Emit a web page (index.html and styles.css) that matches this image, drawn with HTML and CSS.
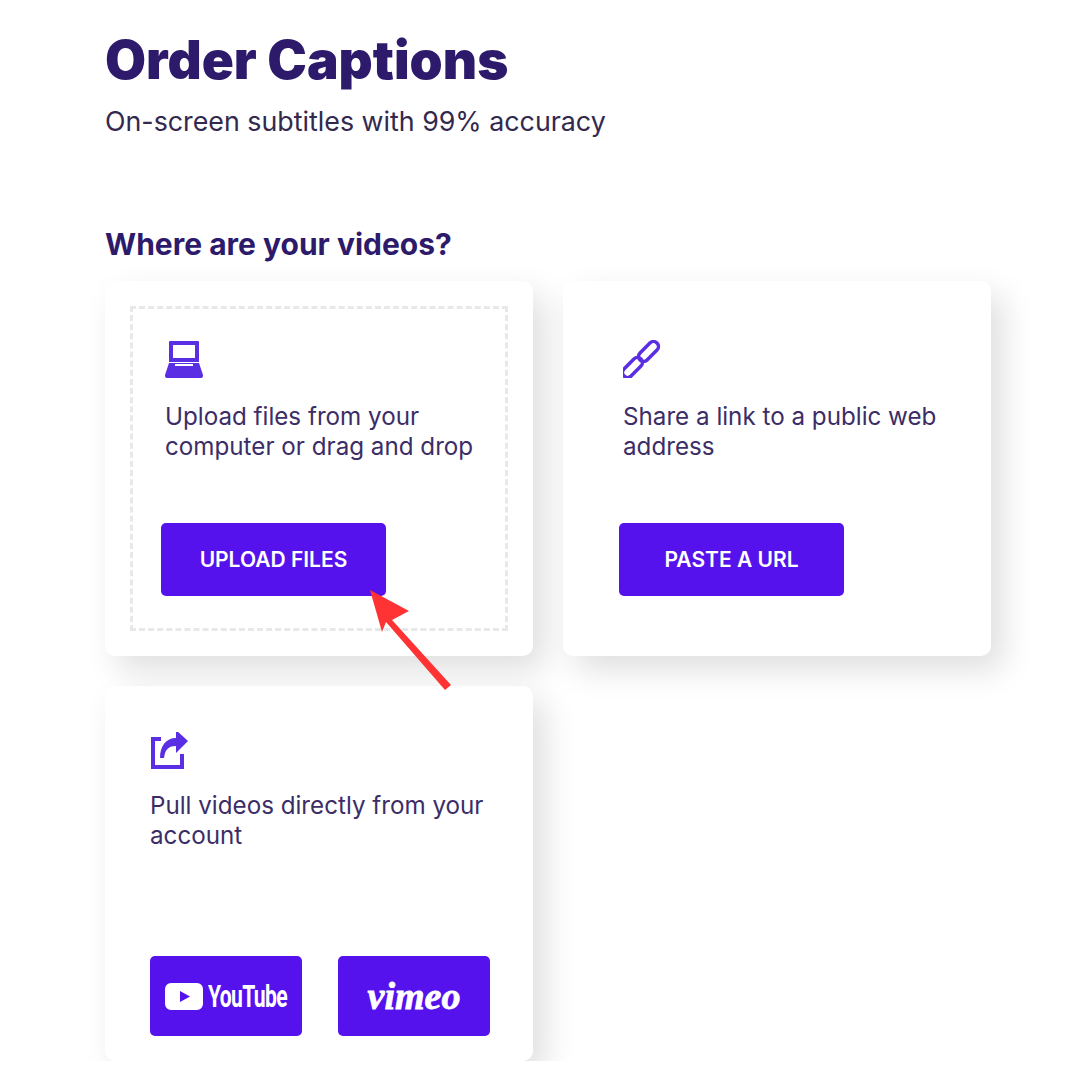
FILE: index.html
```html
<!DOCTYPE html>
<html lang="en">
<head>
    <meta charset="UTF-8">
    <title>Order Captions</title>
    <link rel="stylesheet" href="styles.css">
</head>
<body>
    <div class="page">
        <h1 class="title">Order Captions</h1>
        <p class="subtitle">On-screen subtitles with 99% accuracy</p>
        <h2 class="section-title">Where are your videos?</h2>

        <div class="cards">
            <div class="card">
                <div class="drop-zone dashed">
                    <svg class="icon" viewBox="0 0 38 38">
                        <path fill="#5a2ee2" fill-rule="evenodd" d="M5 1h28a1 1 0 0 1 1 1v20H4V2a1 1 0 0 1 1-1zM8 5v13h22V5z"/>
                        <path fill="#5a2ee2" fill-rule="evenodd" d="M4 23h30l4 12v1a2 2 0 0 1-2 2H2a2 2 0 0 1-2-2v-1zM10 24v2h18v-2z"/>
                    </svg>
                    <p class="card-text">Upload files from your<br>computer or drag and drop</p>
                    <a class="btn">UPLOAD FILES</a>
                </div>
            </div>

            <div class="card">
                <div class="drop-zone">
                    <svg class="icon" viewBox="0 0 38 38">
                        <g fill="none" stroke="#5a2ee2" stroke-width="3.5">
                            <rect x="13.500" y="6.500" width="24" height="10" rx="5" transform="rotate(-45 25.500 11.500)"/>
                            <rect x="-2.500" y="22.500" width="24" height="10" rx="5" transform="rotate(-45 9.500 27.500)"/>
                        </g>
                    </svg>
                    <p class="card-text">Share a link to a public web<br>address</p>
                    <a class="btn">PASTE A URL</a>
                </div>
            </div>

            <div class="card card-accounts">
                <svg class="icon icon-share" viewBox="0 0 38 38">
                    <path fill="none" stroke="#5a2ee2" stroke-width="4" d="M11 7H3v28h29V22"/>
                    <path fill="#5a2ee2" d="M26 -2l12 11-12 12v-7c-7 0-11 3-12 12H10c0-12 6-20 16-20z"/>
                </svg>
                <p class="card-text">Pull videos directly from your<br>account</p>
                <div class="logo-row">
                    <a class="logo-btn">
                        <svg class="yt-mark" viewBox="0 0 38 27">
                            <path fill="#fff" fill-rule="evenodd" d="M6 0h26a6 6 0 0 1 6 6v15a6 6 0 0 1-6 6H6a6 6 0 0 1-6-6V6a6 6 0 0 1 6-6zM15 8v11l10-5.500z"/>
                        </svg>
                        <span class="yt-word">YouTube</span>
                    </a>
                    <a class="logo-btn"><span class="vimeo-word">vimeo</span></a>
                </div>
            </div>
        </div>
    </div>

    <svg class="arrow" viewBox="0 0 1080 1080">
        <path fill="#ff3333" d="M370 590l39 21-17 9 59 65-6 5-59-68-4 10z"/>
    </svg>
</body>
</html>
```

FILE: styles.css
```css
* {
    box-sizing: border-box;
    margin: 0;
    padding: 0;
}

body {
    background: #fff;
    font-family: 'Inter', sans-serif;
    color: #2d1a6b;
}

.page {
    padding: 28px 0 0 105px;
}

.title {
    font-size: 53px;
    line-height: 64px;
    font-weight: 900;
    color: #2d1a6b;
}

.subtitle {
    margin-top: 11px;
    font-size: 26.800px;
    line-height: 36px;
    font-weight: 400;
    color: #33294f;
}

.section-title {
    margin-top: 87px;
    font-size: 30px;
    line-height: 36px;
    font-weight: 700;
}

.cards {
    display: grid;
    grid-template-columns: 428px 428px;
    grid-auto-rows: 375px;
    gap: 30px;
    margin-top: 19px;
}

.card {
    background: #fff;
    border-radius: 10px;
    padding: 25px;
    box-shadow: 12px 14px 32px rgba(0, 0, 0, 0.13);
}

.drop-zone {
    display: flex;
    flex-direction: column;
    align-items: flex-start;
    height: 100%;
    padding: 31px 0 0 32px;
    border: 3px dashed transparent;
}

.drop-zone.dashed {
    border-color: #e8e8e8;
}

.icon {
    display: block;
    width: 38px;
    height: 38px;
}

.card-text {
    margin-top: 24px;
    font-size: 24.200px;
    line-height: 30px;
    color: #3c2d66;
}

.btn {
    display: flex;
    align-items: center;
    justify-content: center;
    width: 225px;
    height: 73px;
    margin: 61px 0 0 -4px;
    background: #5512ec;
    border-radius: 5px;
    color: #fff;
    font-size: 21px;
    font-weight: 600;
}

.card-accounts {
    display: flex;
    flex-direction: column;
    padding: 46px 43px 25px 45px;
}

.card-accounts .card-text {
    margin-top: 21px;
}

.logo-row {
    display: flex;
    justify-content: space-between;
    margin-top: auto;
}

.logo-btn {
    display: flex;
    align-items: center;
    justify-content: center;
    width: 152px;
    height: 80px;
    background: #5512ec;
    border-radius: 5px;
    color: #fff;
}

.yt-mark {
    width: 38px;
    height: 27px;
    flex-shrink: 0;
}

.yt-word {
    width: 79px;
    margin-left: 5px;
    font-family: 'Roboto', sans-serif;
    font-size: 32px;
    font-weight: 700;
    letter-spacing: -1px;
    white-space: nowrap;
    transform: scaleX(0.66);
    transform-origin: left center;
}

.vimeo-word {
    font-family: 'Liberation Serif', serif;
    font-size: 38px;
    line-height: 40px;
    font-weight: 700;
    font-style: italic;
    -webkit-text-stroke: 0.8px #fff;
}

.arrow {
    position: absolute;
    top: 0;
    left: 0;
    width: 1080px;
    height: 1080px;
    pointer-events: none;
}
```
